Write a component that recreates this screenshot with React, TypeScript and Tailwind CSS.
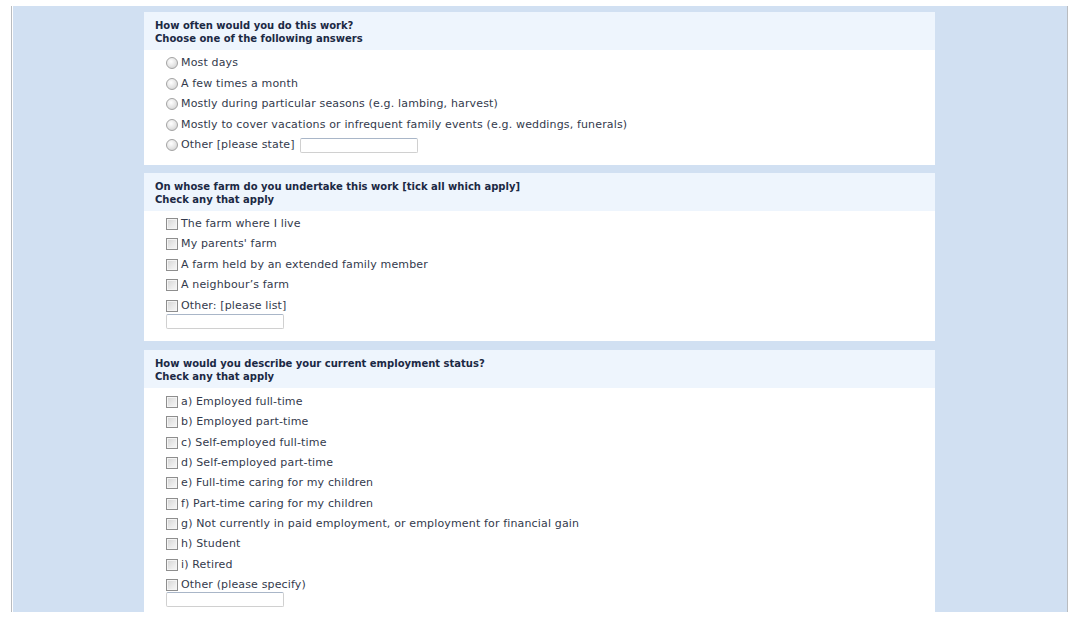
import React from "react";

const font = { fontFamily: '"DejaVu Sans", Verdana, sans-serif' };

function Radio() {
  return (
    <span className="inline-block w-[12px] h-[12px] rounded-full border border-[#a3a3a3] bg-[radial-gradient(circle_at_40%_35%,#ffffff_0%,#e4e4e4_55%,#c9c9c9_100%)] shrink-0" />
  );
}

function Check() {
  return (
    <span className="inline-block w-[12px] h-[12px] border border-[#8e8e8e] bg-[linear-gradient(135deg,#d4d4d4_0%,#ebebeb_60%,#f7f7f7_100%)] shadow-[inset_0_0_0_1px_#f4f4f4] shrink-0" />
  );
}

function TextBox() {
  return (
    <span className="block w-[118px] h-[15px] border border-[#d0d0d0] border-t-[#a9b6c8] rounded-[2px] bg-white" />
  );
}

function Header({ q, sub }: { q: string; sub: string }) {
  return (
    <div className="bg-[#eef5fd] h-[38px] pl-[11px] pt-[7px] text-[10px] leading-[13px] font-bold text-[#1b2944]">
      <div>{q}</div>
      <div>{sub}</div>
    </div>
  );
}

function Row({
  kind,
  label,
  tight,
  children,
}: {
  kind: "r" | "c";
  label: string;
  tight?: boolean;
  children?: React.ReactNode;
}) {
  return (
    <div
      className={
        (tight ? "h-[20.33px]" : "h-[20.5px]") +
        " flex items-center pl-[22px] gap-[3px] text-[11px] tracking-[0.15px] text-[#333a4c]"
      }
    >
      {kind === "r" ? <Radio /> : <Check />}
      <span className="whitespace-nowrap">{label}</span>
      {children}
    </div>
  );
}

export default function App() {
  const sec1 = [
    "Most days",
    "A few times a month",
    "Mostly during particular seasons (e.g. lambing, harvest)",
    "Mostly to cover vacations or infrequent family events (e.g. weddings, funerals)",
  ];
  const sec2 = [
    "The farm where I live",
    "My parents' farm",
    "A farm held by an extended family member",
    "A neighbour’s farm",
    "Other: [please list]",
  ];
  const sec3 = [
    "a) Employed full-time",
    "b) Employed part-time",
    "c) Self-employed full-time",
    "d) Self-employed part-time",
    "e) Full-time caring for my children",
    "f) Part-time caring for my children",
    "g) Not currently in paid employment, or employment for financial gain",
    "h) Student",
    "i) Retired",
    "Other (please specify)",
  ];
  return (
    <div className="w-[1080px] h-[621px] bg-white overflow-hidden" style={font}>
      <div className="ml-[11px] mt-[6px] w-[1057px] h-[606px] border-l border-r border-[#b9bcc0] pl-[1px] flex">
        <div className="w-[1054px] h-full bg-[#d1e0f2] pl-[131px] pt-[6px] flex flex-col gap-[8px] overflow-hidden">
          <div className="w-[791px] bg-white shrink-0">
            <Header q="How often would you do this work?" sub="Choose one of the following answers" />
            <div className="pt-[3px] pb-[9px]">
              {sec1.map((t) => (
                <Row key={t} kind="r" label={t} />
              ))}
              <Row kind="r" label="Other [please state]">
                <span className="ml-[2px]">
                  <TextBox />
                </span>
              </Row>
            </div>
          </div>
          <div className="w-[791px] bg-white shrink-0">
            <Header q="On whose farm do you undertake this work [tick all which apply]" sub="Check any that apply" />
            <div className="pt-[3px] pb-[12px]">
              {sec2.map((t) => (
                <Row key={t} kind="c" label={t} />
              ))}
              <div className="pl-[22px] mt-[-2px]">
                <TextBox />
              </div>
            </div>
          </div>
          <div className="w-[791px] bg-white shrink-0 mt-[1px] grow">
            <Header q="How would you describe your current employment status?" sub="Check any that apply" />
            <div className="pt-[4px] pb-[12px]">
              {sec3.map((t) => (
                <Row key={t} kind="c" label={t} tight />
              ))}
              <div className="pl-[22px] mt-[-3px]">
                <TextBox />
              </div>
            </div>
          </div>
        </div>
      </div>
    </div>
  );
}
